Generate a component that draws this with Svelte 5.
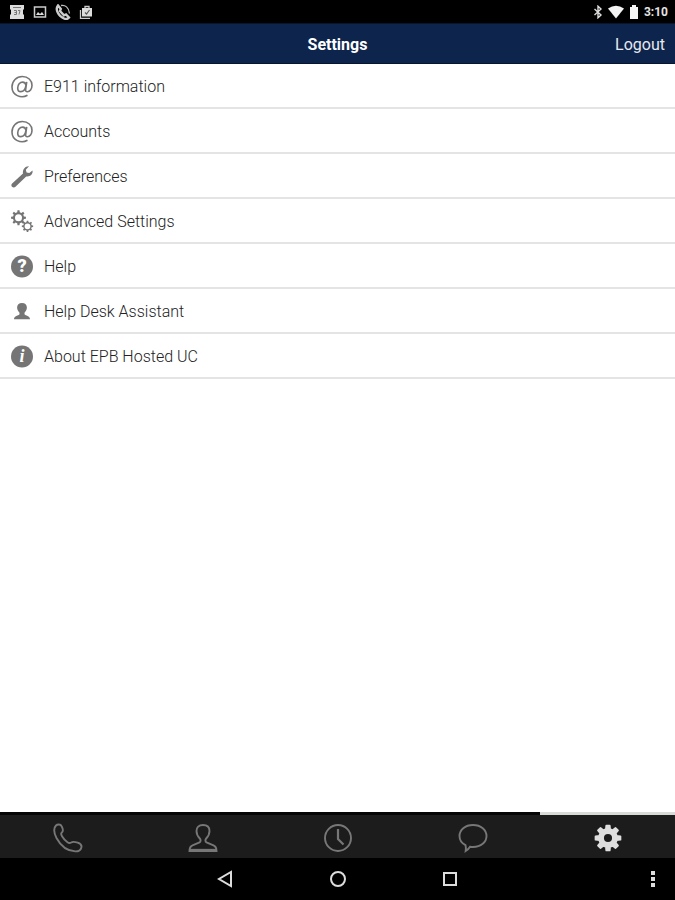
<script>
  const rows = [
    { icon: "at", label: "E911 information" },
    { icon: "at", label: "Accounts" },
    { icon: "wrench", label: "Preferences" },
    { icon: "gears", label: "Advanced Settings" },
    { icon: "help", label: "Help" },
    { icon: "person", label: "Help Desk Assistant" },
    { icon: "info", label: "About EPB Hosted UC" },
  ];

  const tabs = ["Phone", "Contacts", "History", "Messages", "Settings"];
  let active = $state("Settings");

  // outline of a cog with flat teeth
  function cog(cx, cy, outer, inner, teeth = 8) {
    const step = (Math.PI * 2) / teeth;
    const points = [];
    for (let i = 0; i < teeth; i++) {
      const a = i * step - Math.PI / 2;
      for (const [r, off] of [
        [inner, -0.29],
        [outer, -0.17],
        [outer, 0.17],
        [inner, 0.29],
      ]) {
        const x = cx + r * Math.cos(a + off * step);
        const y = cy + r * Math.sin(a + off * step);
        points.push(x.toFixed(2) + " " + y.toFixed(2));
      }
    }
    return "M" + points.join("L") + "Z";
  }
</script>

<div class="screen">
  <div class="status">
    <div class="group left">
      <svg width="16" height="16" viewBox="0 0 16 16">
        <path fill="#ddd" d="M1 1h14v4l-1 1v4l1 1v4H1v-4l1-1V6L1 5z" />
        <path fill="none" stroke="#777" d="M4 3.500h8M5 6.500h2.500v4H5M5.500 8.500h2M9 6.500h2l-1 4" />
      </svg>
      <svg width="14" height="16" viewBox="0 0 14 16">
        <rect x="1.500" y="3" width="11" height="10" fill="none" stroke="#ccc" stroke-width="1.500" />
        <path fill="#ddd" d="M3 11l2-3 2 2 2-2 2 3z" />
      </svg>
      <svg width="16" height="16" viewBox="0 0 16 16">
        <path fill="none" stroke="#ccc" stroke-width="2.400" d="M3 1.500C0 5 3 12 9 14.500c2 .8 4 .3 5-1l-3-3-2 .8L5 7l.8-2z" />
        <path fill="none" stroke="#bbb" stroke-width="1.300" d="M6 1.500c4-1 8 2 8.500 8" />
      </svg>
      <svg width="14" height="16" viewBox="0 0 14 16">
        <path fill="none" stroke="#ccc" stroke-width="1.300" d="M1.500 6v8.300H11M6 4V2.500h4V4" />
        <path fill="#ddd" d="M3 4h10v8.500H3z" />
        <path fill="none" stroke="#555" stroke-width="1.200" d="M6 8.500l1.500 1.500L10.500 6" />
      </svg>
    </div>
    <div class="group right">
      <svg width="10" height="14" viewBox="0 0 10 14">
        <path fill="none" stroke="#ddd" stroke-width="1.400" d="M1.500 4l6.500 6-3 2.800V1.200L8 4l-6.500 6" />
      </svg>
      <svg width="16" height="14" viewBox="0 0 16 14">
        <path fill="#f4f4f4" d="M0 3.500Q8-2 16 3.500L8 13.500z" />
      </svg>
      <svg width="10" height="14" viewBox="0 0 10 14">
        <path fill="#f4f4f4" d="M1 2h2V0h4v2h2v12H1z" />
      </svg>
      <span class="clock">3:10</span>
    </div>
  </div>

  <header>
    <h1>Settings</h1>
    <button class="logout">Logout</button>
  </header>

  <main>
    <ul>
      {#each rows as row}
        <li>
          <button class="row">
            <svg width="24" height="24" viewBox="0 0 24 24" fill="#757575" aria-hidden="true">
              {#if row.icon === "at"}
                <path
                  fill="none"
                  stroke="#757575"
                  stroke-width="1.600"
                  d="M17.500 20.300C11 24 2 20.200 2 12 2 6 6.500 1.500 12.300 1.500c5.700 0 9.700 3.800 9.700 8.800 0 4-2.300 6.500-4.600 6.500-1.500 0-2-1-1.700-2.500l1-7.500M16 10.300c-.3-2-1.600-3.200-3.400-3.200-2.700 0-4.900 2.700-4.900 5.800 0 2.300 1.200 3.700 3.100 3.700 2.500 0 4.500-2.300 5.200-6.300z"
                />
              {:else if row.icon === "wrench"}
                <path
                  d="M22.500 5.500c.8 3.600-2.400 6.500-6.300 5.900L5.500 21.800c-.9.900-2.600.9-3.500 0-.9-.9-.8-2.400.1-3.200L13 8.600C12.300 4.300 15.200 1 19 1.200l-3.200 3.600.8 2.600 2.700.7z"
                />
              {:else if row.icon === "gears"}
                <path fill-rule="evenodd" d={cog(8.500, 7.800, 7.500, 5.600) + "M12 7.800a3.500 3.500 0 1 0-7 0a3.500 3.500 0 1 0 7 0z"} />
                <path fill-rule="evenodd" d={cog(17.500, 16.300, 5.700, 4.300) + "M20.400 16.300a2.900 2.900 0 1 0-5.800 0a2.900 2.900 0 1 0 5.800 0z"} />
              {:else if row.icon === "help"}
                <circle cx="12" cy="11.500" r="11" />
                <text class="mark" x="12" y="17" text-anchor="middle">?</text>
              {:else if row.icon === "person"}
                <path d="M12 3c3.200 0 4.900 1.900 4.900 4.600 0 2.500-1.400 4-2.400 5.200v1.500c1 1.500 5.500 1.400 5.500 5H4c0-3.600 4.500-3.500 5.500-5v-1.500c-1-1.200-2.400-2.700-2.400-5.200C7.100 4.900 8.800 3 12 3z" />
              {:else}
                <circle cx="12" cy="11.500" r="11" />
                <text class="mark serif" x="12" y="17" text-anchor="middle">i</text>
              {/if}
            </svg>
            <span>{row.label}</span>
          </button>
        </li>
      {/each}
    </ul>
  </main>

  <nav class="tabs">
    {#each tabs as tab}
      <button class="tab" class:active={active === tab} aria-label={tab} onclick={() => (active = tab)}>
        <svg width="30" height="30" viewBox="0 0 30 30" fill="none" stroke="currentColor" stroke-width="1.900">
          {#if tab === "Phone"}
            <path d="M3 2.500c1.500-1.500 4.500-1.500 5.500.5 1.200 2.200 2.200 5 .3 6.500-1.300 1-.8 2 .2 3.700 1.200 2 3.500 4.600 5.500 6 1.300 1 2.500 1 3.700.3 1.700-1.200 4-.6 6.500.2 3 1 4.300 2.800 3.600 5-.7 2.500-3.300 3.800-6 3.700C15 28 8 23.500 3.500 15 1 10 0 5.500 3 2.500z" />
          {:else if tab === "Contacts"}
            <path d="M15 2c4.200 0 6.500 2.400 6.500 6 0 3.500-1.300 5.500-3.300 7.500-1 1-1.200 3.200.3 3.900l7 2.900c2 .8 3 2 3 5.700h-27c0-3.700 1-4.900 3-5.700l7-2.900c1.500-.7 1.300-2.900.3-3.900-2-2-3.300-4-3.300-7.500 0-3.600 2.300-6 6.500-6z" />
            <path d="M2 26.800h26" />
          {:else if tab === "History"}
            <circle cx="15" cy="15" r="13" />
            <path stroke-width="2.200" d="M15 6v10l5.500 5.500" />
          {:else if tab === "Messages"}
            <path d="M15 2c8 0 13.500 4.800 13.500 11S23 24 15 24c-1 0-2-.1-3-.3-1 1.700-2.500 3.200-4.300 4.300.3-1.800.3-3.800-.2-5.900C3.800 20.200 1.500 17 1.500 13 1.500 6.800 7 2 15 2z" />
          {:else}
            <path
              fill="currentColor"
              stroke-linejoin="round"
              fill-rule="evenodd"
              d={cog(15, 15, 12.500, 9) + "M20 15a5 5 0 1 0-10 0a5 5 0 1 0 10 0z"}
            />
          {/if}
        </svg>
      </button>
    {/each}
  </nav>

  <div class="system">
    <span></span>
    <button aria-label="Back">
      <svg width="18" height="18" viewBox="0 0 18 18"><path d="M15 2v14L3 9z" /></svg>
    </button>
    <button aria-label="Home">
      <svg width="18" height="18" viewBox="0 0 18 18"><circle cx="9" cy="9" r="7" /></svg>
    </button>
    <button aria-label="Overview">
      <svg width="18" height="18" viewBox="0 0 18 18"><path d="M3 3h12v12H3z" /></svg>
    </button>
    <button class="more" aria-label="More">
      <svg width="4" height="18" viewBox="0 0 4 18"><path class="dots" d="M0 1h4v4H0zM0 7h4v4H0zM0 13h4v4H0z" /></svg>
    </button>
  </div>
</div>

<style>
  :global(body) {
    margin: 0;
    background: #fff;
  }

  .screen {
    display: flex;
    flex-direction: column;
    min-height: 100vh;
    font-family: Roboto, "Liberation Sans", sans-serif;
    font-size: 16px;
  }

  button {
    margin: 0;
    padding: 0;
    border: 0;
    background: none;
    font: inherit;
    cursor: pointer;
  }

  svg {
    display: block;
    flex: none;
  }

  .status {
    display: flex;
    align-items: center;
    justify-content: space-between;
    height: 23px;
    padding: 0 7px 0 9px;
    background: #000;
  }

  .group {
    display: flex;
    align-items: center;
  }

  .left {
    gap: 8px;
  }

  .right {
    gap: 5px;
  }

  .clock {
    color: #e4e4e4;
    font-size: 12px;
    font-weight: 700;
    line-height: 16px;
  }

  header {
    display: grid;
    grid-template-columns: 1fr auto 1fr;
    align-items: center;
    box-sizing: border-box;
    height: 41px;
    padding: 2px 10px 0;
    border-top: 1px solid #07152f;
    border-bottom: 1px solid #07152f;
    background: #0d244c;
    color: #fff;
  }

  h1 {
    grid-column: 2;
    margin: 0;
    font-size: 16px;
    font-weight: 700;
  }

  .logout {
    justify-self: end;
    color: #e6e9ee;
  }

  main {
    flex: 1;
    background: #fff;
  }

  ul {
    margin: 0;
    padding: 0;
    list-style: none;
  }

  li {
    border-bottom: 2px solid #e4e4e4;
  }

  .row {
    display: flex;
    align-items: center;
    gap: 10px;
    width: 100%;
    height: 43px;
    padding: 2px 10px 0;
    color: #222;
    font-weight: 300;
    text-align: left;
  }

  .mark {
    fill: #fff;
    font-size: 18px;
    font-weight: 900;
  }

  .serif {
    font-family: "Liberation Serif", serif;
    font-style: italic;
    font-weight: 700;
  }

  .tabs {
    display: grid;
    grid-template-columns: repeat(5, 1fr);
    background: #1c1c1c;
  }

  .tab {
    display: flex;
    align-items: center;
    justify-content: center;
    box-sizing: border-box;
    height: 46px;
    padding-top: 3px;
    border-top: 3px solid #050505;
    color: #777;
  }

  .tab.active {
    border-top-color: #d8dad8;
    color: #dedede;
  }

  .system {
    display: grid;
    grid-template-columns: 3fr 2fr 2fr 2fr 3fr;
    align-items: center;
    height: 42px;
    background: #000;
  }

  .system button {
    display: flex;
    justify-content: center;
  }

  .system .more {
    justify-content: flex-end;
    padding-right: 20px;
  }

  .system path,
  .system circle {
    fill: none;
    stroke: #ddd;
    stroke-width: 2;
  }

  .system .dots {
    fill: #ddd;
    stroke: none;
  }
</style>
